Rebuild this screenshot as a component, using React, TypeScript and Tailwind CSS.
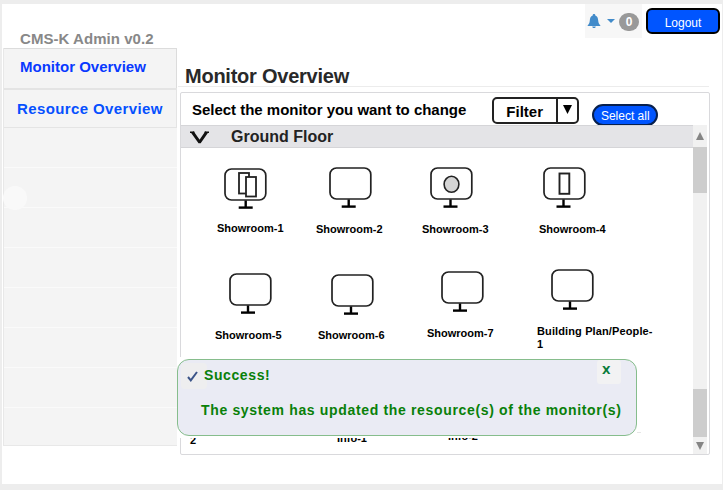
import React from "react";

type Screen = {
  label: string;
  cell: string;
  icon: string;
  text: string;
  stand: number;
  art?: "double" | "circle" | "single";
};

const firstRow: Screen[] = [
  { label: "Showroom-1", cell: "w-[99px]", icon: "ml-[7px] mt-[1px]", text: "mt-[11px]", stand: 21.7, art: "double" },
  { label: "Showroom-2", cell: "w-[106px]", icon: "ml-[13px]", text: "mt-[13px]", stand: 19.7 },
  { label: "Showroom-3", cell: "w-[117px]", icon: "ml-[8px]", text: "mt-[13px]", stand: 20.5, art: "circle" },
  { label: "Showroom-4", cell: "w-[117px]", icon: "ml-[4px]", text: "mt-[13px]", stand: 20.5, art: "single" },
];

const secondRow: Screen[] = [
  { label: "Showroom-5", cell: "w-[103px]", icon: "ml-[14px] mt-[4px]", text: "mt-[13px]", stand: 19 },
  { label: "Showroom-6", cell: "w-[109px]", icon: "ml-[13px] mt-[5px]", text: "mt-[12px]", stand: 20 },
  { label: "Showroom-7", cell: "w-[110px]", icon: "ml-[14px] mt-[2px]", text: "mt-[13px]", stand: 19 },
  { label: "Building Plan/People-1", cell: "w-[120px]", icon: "ml-[14px]", text: "mt-[13px] tracking-[0.12px]", stand: 19 },
];

function MonitorIcon({ className, stand, art }: { className: string; stand: number; art?: Screen["art"] }) {
  return (
    <svg className={`block shrink-0 ${className}`} width="43" height="43" viewBox="0 0 43 43" fill="none" stroke="#222">
      <rect x="1" y="1" width="40.8" height="31" rx="6.5" strokeWidth="1.7" />
      <path d={`M${stand} 32.5V39.5`} stroke="#000" strokeWidth="2.4" />
      <path d={`M${stand - 7} 39.6h14`} stroke="#000" strokeWidth="2.4" />
      {art === "double" && (
        <g strokeWidth="1.8" fill="#fff">
          <rect x="15" y="5" width="10" height="20.5" />
          <rect x="22" y="9" width="10" height="19.5" />
        </g>
      )}
      {art === "circle" && <ellipse cx="21.5" cy="17.3" rx="7.4" ry="8" fill="#d4d4d4" strokeWidth="1.6" />}
      {art === "single" && <rect x="16.5" y="6.5" width="9.8" height="20.3" strokeWidth="1.9" />}
    </svg>
  );
}

function MonitorCell({ screen }: { screen: Screen }) {
  return (
    <div className={`flex shrink-0 flex-col items-start ${screen.cell}`}>
      <MonitorIcon className={screen.icon} stand={screen.stand} art={screen.art} />
      <span className={`text-[11px] leading-[13px] ${screen.text}`}>{screen.label}</span>
    </div>
  );
}

function Scrollbar() {
  return (
    <div className="flex w-[14px] shrink-0 flex-col bg-[#f1f1f1]">
      <div className="flex h-[22px] items-center justify-center">
        <svg width="8" height="8" viewBox="0 0 8 8"><path d="M4 0 8 8H0Z" fill="#858585" /></svg>
      </div>
      <div className="h-[46px] bg-[#cdcdcd]" />
      <div className="grow" />
      <div className="h-[48px] bg-[#cdcdcd]" />
      <div className="flex h-[17px] items-center justify-center">
        <svg width="8" height="8" viewBox="0 0 8 8"><path d="M0 0H8L4 8Z" fill="#858585" /></svg>
      </div>
    </div>
  );
}

function Sidebar() {
  return (
    <aside className="flex w-[174px] shrink-0 flex-col">
      <div className="mt-[26px] h-[18px] pl-[17px] text-[15px] leading-[18px] tracking-[0.05px] text-[#888]">CMS-K Admin v0.2</div>
      <nav className="relative flex h-[398px] flex-col border-b border-l border-[#e8e8e8] bg-[#f4f4f4]">
        <a className="h-[40px] border-t border-r border-[#dcdcdc] pl-[16px] pt-[9px] text-[15px] leading-[18px] text-[#0839ff]">Monitor Overview</a>
        <a className="h-[40px] border-t-2 border-r border-b border-[#e4e4e4] pl-[13px] pt-[10px] text-[15px] leading-[18px] tracking-[0.38px] text-[#0550ff]">Resource Overview</a>
        {[0, 1, 2, 3, 4, 5, 6].map((n) => (
          <div key={n} className="h-[40px] border-b border-[#fafafa]" />
        ))}
        <span className="absolute left-[-1px] top-[138px] size-[24px] rounded-full bg-[#f9f9f9]" />
      </nav>
    </aside>
  );
}

function TopBar() {
  return (
    <div className="flex h-[34px] items-start justify-end pr-[2px]">
      <div className="flex h-[34px] w-[57px] items-center bg-[#f7f7f7] pl-[2px]">
        <svg width="14" height="15" viewBox="0 0 14 15" fill="#428bca">
          <path d="M7 0C8 0 8.3.6 8.3 1.4 10.4 2 11 3.8 11.2 6.4 11.4 9 12.2 10.4 13.3 11.3V12H.7V11.3C1.8 10.4 2.6 9 2.8 6.4 3 3.8 3.6 2 5.7 1.4 5.7.6 6 0 7 0ZM5.2 12.5H8.8C8.6 13.6 8 14 7 14S5.4 13.6 5.2 12.5Z" />
        </svg>
        <svg className="ml-[6px]" width="8" height="4" viewBox="0 0 8 4"><path d="M0 0H8L4 4Z" fill="#428bca" /></svg>
        <span className="ml-[4px] mt-[1px] flex h-[18px] w-[20px] items-center justify-center rounded-full bg-[#999] text-[12px] leading-none text-white">0</span>
      </div>
      <button className="ml-[4px] mt-[4px] h-[26px] w-[74px] rounded-[6px] border-2 border-black bg-[#0055ff] pt-[3px] text-[12px] font-normal leading-[18px] text-white">Logout</button>
    </div>
  );
}

function Toast() {
  return (
    <div className="absolute left-[177px] top-[357px] h-[81px] w-[460px] bg-white pt-[2px]">
      <div className="absolute left-[460px] top-[75px] h-px w-[4px] bg-[#e6e6e6]" />
      <div className="flex h-[77px] flex-col rounded-[12px] border border-[#86bd8c] bg-[#eaebf4] text-[14px] text-[#098009]">
        <div className="flex h-[27px] items-start pl-[3px]">
          <span className="mt-[3px] flex h-[26px] w-[26px] items-center justify-center rounded-[4px] bg-[#eeeeef]">
            <svg className="-ml-[4px]" width="11" height="11" viewBox="0 0 11 11" fill="none"><path d="M1 6 3.8 9.3 10 1" stroke="#3b5488" strokeWidth="2" /></svg>
          </span>
          <span className="-ml-[3px] mt-[7px] leading-[17px] tracking-[0.6px]">Success!</span>
          <span className="ml-auto mr-[15px] h-[24px] w-[24px] rounded-[3px] bg-[#f2f2f3] pl-[5px] pt-[1px] font-['DejaVu_Sans',sans-serif] text-[11px] leading-[19px] text-[#087b3b]">X</span>
        </div>
        <p className="mt-[15px] pl-[23px] leading-[17px] tracking-[0.66px] whitespace-nowrap">The system has updated the resource(s) of the monitor(s)</p>
      </div>
    </div>
  );
}

export default function App() {
  return (
    <div className="relative h-[490px] w-[723px] overflow-hidden bg-[#ededed] pl-[2px] pt-[4px] font-['Liberation_Sans',Arial,sans-serif] font-bold text-black">
      <div className="flex h-[480px] w-[720px] bg-white pl-px">
        <Sidebar />
        <main className="flex grow flex-col pl-px">
          <TopBar />
          <h1 className="h-[49px] w-[531px] border-b border-[#ececec] pl-[7px] pt-[27px] text-[20px] leading-[23px] tracking-[-0.24px] text-[#292929]">Monitor Overview</h1>
          <section className="ml-[2px] mt-[5px] flex h-[363px] w-[530px] flex-col rounded-[2px] border border-[#d9d9dc]">
            <div className="flex h-[32px] shrink-0 items-start pl-[11px]">
              <span className="mt-[8px] text-[15px] leading-[18px] tracking-[-0.02px] whitespace-nowrap">Select the monitor you want to change</span>
              <div className="ml-[26px] mt-[4px] flex h-[27px] w-[87px] shrink-0 rounded-[5px] border-2 border-[#222] text-[15px]">
                <span className="w-[64px] border-r-2 border-[#222] pl-[12px] leading-[26px]">Filter</span>
                <span className="flex grow items-center justify-center pb-[2px]">
                  <svg width="9" height="9" viewBox="0 0 9 9"><path d="M0 0H9L4.5 9Z" /></svg>
                </span>
              </div>
              <button className="ml-[13px] mt-[11px] h-[22px] w-[66px] shrink-0 rounded-full border-2 border-[#08204d] bg-[#0055ff] text-[12px] font-normal leading-[20px] whitespace-nowrap text-white">Select all</button>
            </div>
            <div className="flex min-h-0 grow">
              <div className="flex w-[512px] shrink-0 flex-col overflow-hidden">
                <div className="flex h-[23px] shrink-0 items-center border-y border-[#d5d5d8] bg-[#e4e4e7] pl-[9px] text-[16px] text-[#222]">
                  <svg className="mt-[2px]" width="20" height="13" viewBox="0 0 20 13" fill="none"><path d="M0 1.2H4.4M14.6 1.2H19" stroke="#111" strokeWidth="1.4" /><path d="M2.4 1.2 9.3 10.8H9.9L16.6 1.2" stroke="#111" strokeWidth="3" /></svg>
                  <span className="ml-[21px] leading-[20px]">Ground Floor</span>
                </div>
                <div className="flex h-[101px] shrink-0 pl-[36px] pt-[19px]">
                  {firstRow.map((s) => <MonitorCell key={s.label} screen={s} />)}
                </div>
                <div className="flex h-[164px] shrink-0 pl-[34px] pt-[20px]">
                  {secondRow.map((s) => <MonitorCell key={s.label} screen={s} />)}
                </div>
                <div className="flex h-[41px] shrink-0 items-start pl-[9px] pt-[21px] text-[11px] leading-[13px]">
                  <span className="w-[147px]">2</span>
                  <span className="-mt-[2px] w-[111px]">Info-1</span>
                  <span className="-mt-[4px]">Info-2</span>
                </div>
              </div>
              <Scrollbar />
            </div>
          </section>
        </main>
      </div>
      <Toast />
    </div>
  );
}
